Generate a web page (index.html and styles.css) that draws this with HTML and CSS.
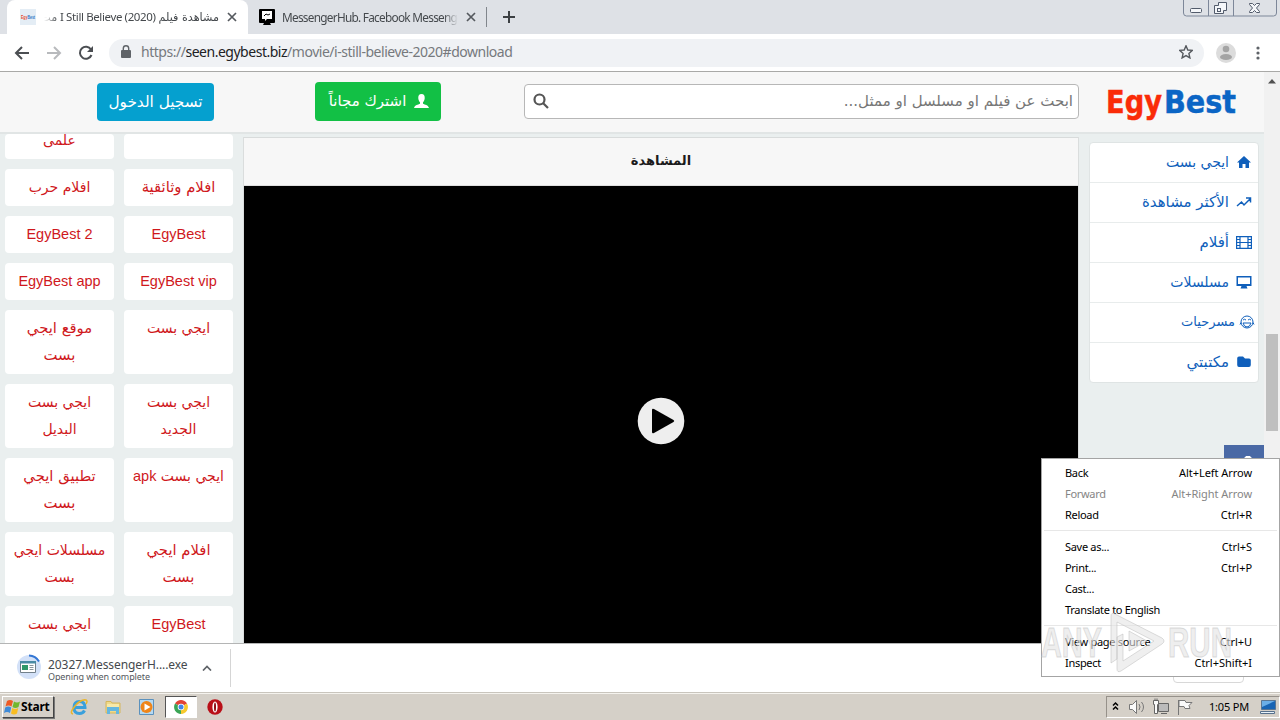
FILE: index.html
```html
<!DOCTYPE html>
<html lang="ar">
<head>
<meta charset="utf-8">
<title>EgyBest</title>
<link rel="stylesheet" href="styles.css">
</head>
<body>
<div class="tabs">
  <div class="tab tab-active">
    <svg class="favicon" viewBox="0 0 16 16"><path fill="#e4edf5" d="M0 0h16v16H0z"/><text x="1" y="10" textLength="14" lengthAdjust="spacingAndGlyphs"><tspan fill="#e6482d">Egy</tspan><tspan fill="#2d76c4">Best</tspan></text></svg>
    <span class="tab-title fade-left" dir="rtl"><span class="t-ar">مشاهدة فيلم</span> <bdi>I Still Believe (2020)</bdi> <span class="t-ar">مت</span></span>
    <svg class="close" viewBox="0 0 10 10"><path d="M1 1l8 8M9 1L1 9"/></svg>
  </div>
  <div class="tab tab-second">
    <svg class="msg-icon" viewBox="0 0 16 17"><path fill="#000" d="M1 0h14a1 1 0 0 1 1 1v12a1 1 0 0 1-1 1h-4l1 2H4l1-2H1a1 1 0 0 1-1-1V1a1 1 0 0 1 1-1z"/><path fill="#fff" d="M3 2h10v8H8l-2 2v-2H3z"/><path d="M5 7l2-2 2 1 2-1" fill="none" stroke="#000"/></svg>
    <span class="tab-title fade-right">MessengerHub. Facebook Messenge</span>
    <svg class="close" viewBox="0 0 10 10"><path d="M1 1l8 8M9 1L1 9"/></svg>
  </div>
  <span class="tab-divider"></span>
  <svg class="plus" viewBox="0 0 12 12"><path d="M6 0v12M0 6h12"/></svg>
  <svg class="winctl" viewBox="0 0 94 17"><path d="M.5 0v13q0 3 3 3h87q3 0 3-3V0M25.500 0v16M50.500 0v16" fill="none" stroke="#7d8799"/><g fill="#f4f6f9" stroke="#525b6b"><rect x="7.500" y="8.500" width="11" height="4" rx="1"/><path d="M35.500 2.500h8v8h-3v3h-9v-8h4z"/><rect x="34.500" y="8.500" width="3" height="3"/><path d="M66.500 3.500h3l2 2 2-2h3v1l-3 3.500 3 3.500v1h-3l-2-2-2 2h-3v-1l3-3.500-3-3.500z"/></g></svg>
</div>
<div class="toolbar">
  <svg class="nav-icons" viewBox="0 0 90 20"><g fill="none" stroke-width="2"><path stroke="#4b4e52" d="M22 10H9M15 4l-6 6 6 6"/><path stroke="#b8babd" d="M40 10h13M47 4l6 6-6 6"/><path stroke="#4b4e52" d="M84 6.500a6 6 0 1 0 .5 5.500"/></g><path fill="#4b4e52" d="M86 3v6h-6z"/></svg>
  <div class="omnibox">
    <svg class="lock" viewBox="0 0 10 13"><path fill="#5f6368" d="M1 5h8q1 0 1 1v6q0 1-1 1H1q-1 0-1-1V6q0-1 1-1z"/><path d="M2.300 5.500V3.500a2.700 2.700 0 0 1 5.400 0v2" fill="none" stroke="#5f6368" stroke-width="1.400"/></svg>
    <span class="url">https://<b>seen.egybest.biz</b>/movie/i-still-believe-2020#download</span>
    <svg class="star" viewBox="0 0 14 14"><path d="M7 .8l1.800 4.200 4.600.4-3.500 3 1 4.500L7 10.600l-3.900 2.300 1-4.500-3.500-3 4.600-.4z"/></svg>
  </div>
  <svg class="avatar" viewBox="0 0 20 20"><circle cx="10" cy="10" r="10" fill="#dcdcdc"/><circle cx="10" cy="6" r="3.300" fill="#a4a4a4"/><ellipse cx="10" cy="14" rx="6" ry="3" fill="#a4a4a4"/></svg>
  <svg class="dots" viewBox="0 0 4 14"><g fill="#5f6368"><circle cx="2" cy="2" r="1.600"/><circle cx="2" cy="7" r="1.600"/><circle cx="2" cy="12" r="1.600"/></g></svg>
</div>
<div class="viewport">
  <div class="site">
    <header class="head">
      <a class="btn btn-login" dir="rtl">تسجيل الدخول</a>
      <a class="btn btn-join" dir="rtl"><svg viewBox="0 0 15 14"><path fill="#fff" d="M7.500 0c2.500 0 3.500 2 3.200 4.500-.2 2-1 3-1.700 3.800v1.500c2 1 5 1 6 4.200H0c1-3.200 4-3.200 6-4.200V8.300C5.300 7.500 4.500 6.500 4.300 4.500 4 2 5 0 7.500 0z"/></svg>اشترك مجاناً</a>
      <div class="search"><svg viewBox="0 0 16 16"><circle cx="6.500" cy="6.500" r="5" /><path d="M10 10l5 5"/></svg><span dir="rtl">ابحث عن فيلم او مسلسل او ممثل...</span></div>
      <svg class="logo" viewBox="0 0 132 44"><text x="-1" y="31" textLength="56" lengthAdjust="spacingAndGlyphs" fill="#fa2b08" stroke="#fa2b08">Egy</text><text x="57" y="31" textLength="72" lengthAdjust="spacingAndGlyphs" fill="#0b65c5" stroke="#0b65c5">Best</text></svg>
    </header>
    <div class="content">
      <div class="tags">
        <a dir="rtl" class="cut">علمى</a><a class="cut"></a>
        <a dir="rtl">افلام حرب</a><a dir="rtl" class="big">افلام وثائقية</a>
        <a class="en">EgyBest 2</a><a class="en">EgyBest</a>
        <a class="en">EgyBest app</a><a class="en">EgyBest vip</a>
        <a dir="rtl" class="big">موقع ايجي<br>بست</a><a dir="rtl">ايجي بست</a>
        <a dir="rtl">ايجي بست<br>البديل</a><a dir="rtl">ايجي بست<br>الجديد</a>
        <a dir="rtl" class="big">تطبيق ايجي<br>بست</a><a dir="rtl">ايجي بست <span class="en">apk</span></a>
        <a dir="rtl">مسلسلات ايجي<br>بست</a><a dir="rtl" class="big">افلام ايجي<br>بست</a>
        <a dir="rtl">ايجي بست</a><a class="en">EgyBest</a>
      </div>
      <main class="player">
        <h2 dir="rtl">المشاهدة</h2>
        <div class="video"><svg viewBox="0 0 48 48"><circle cx="24" cy="24" r="23.300" fill="#eee"/><path d="M15 13q0-2 2-1l19.500 11q1.500 1 0 2L17 36q-2 1-2-1z"/></svg></div>
      </main>
      <aside class="side">
        <nav class="menu" dir="rtl">
          <a><svg viewBox="0 0 16 16"><path fill="#0f5fbb" d="M8 2l7 6.500h-2V14H9.500v-4h-3v4H3V8.500H1z"/></svg>ايجي بست</a>
          <a class="big"><svg viewBox="0 0 16 16"><path fill="none" stroke="#0f5fbb" stroke-width="1.500" d="M1 12l4.500-4L8 11l6-6M10 4h4.500v4.500"/></svg>الأكثر مشاهدة</a>
          <a class="big"><svg viewBox="0 0 16 16"><path fill="none" stroke="#0f5fbb" stroke-width="1.200" d="M.6 2.600h14.800v11.800H.6zM4 2.500v12M12 2.500v12M4 8.500h8M.5 5.500H4M.5 8.500H4M.5 11.500H4M12 5.500h3.500M12 8.500h3.500M12 11.500h3.500"/></svg>أفلام</a>
          <a><svg viewBox="0 0 16 16"><path fill="#0f5fbb" fill-rule="evenodd" d="M.5 2h15v10h-5l1 2.500h-7l1-2.500h-5zM2 3.500v6.500h12V3.500z"/></svg>مسلسلات</a>
          <a class="wide"><svg viewBox="0 0 16 16"><g fill="none" stroke="#0f5fbb"><circle cx="8" cy="8" r="6"/><path d="M4 9h8q-1 4-4 4T4 9zM4 6q1.500-1.500 3 0M9 6q1.500-1.500 3 0M2 8.500l-1 2M14 8.500l1 2"/></g></svg>مسرحيات</a>
          <a class="big"><svg viewBox="0 0 16 16"><path fill="#0f5fbb" d="M3 2.500h4l2 2h4q1.800 0 1.800 1.800V11q0 2-2 2H3q-1.800 0-1.800-2V4.300q0-1.800 1.800-1.800z"/></svg>مكتبتي</a>
        </nav>
        <div class="share"></div>
      </aside>
    </div>
  </div>
  <div class="scroll"><svg viewBox="0 0 8 5"><path d="M4 0l4 4.500H0z" fill="#505050"/></svg><span class="thumb"></span></div>
</div>
<div class="downloads">
  <svg class="dl-icon" viewBox="0 0 26 26"><circle cx="13" cy="13" r="12" fill="#d3e1f8"/><path d="M13 1.500a12 12 0 0 1 10 6" fill="none" stroke="#3477d4" stroke-width="2"/><path fill="#fff" stroke="#72808b" d="M4.500 7.500h15v11h-15z"/><path fill="#4a8ba5" d="M4 7h16v2.500H4z"/><path fill="#2f9869" d="M6 11h6v5H6z"/><path stroke="#89949c" d="M13.500 11.500h4M13.500 13.500h4M13.500 15.500h4"/></svg>
  <div class="dl-text"><div class="dl-name">20327.MessengerH....exe</div><div class="dl-sub">Opening when complete</div></div>
  <svg class="chev" viewBox="0 0 10 6"><path d="M1 5.500l4-4 4 4" fill="none" stroke="#5f6368" stroke-width="1.700"/></svg>
  <span class="dl-div"></span>
  <span class="show-all"></span>
</div>
<div class="taskbar">
  <div class="start"><svg viewBox="0 0 17 16"><path fill="#ee5a24" d="M3 2q3-2 6 0L7.500 7.500q-3-2-6 0z"/><path fill="#72b72e" d="M10 2.500q3 2 6 0L14.500 8q-3 2-6 0z"/><path fill="#3f8bd8" d="M1.200 8.500q3-2 6 0L6 14q-3-2-6 0z"/><path fill="#f9bd22" d="M8.200 9q3 2 6 0L13 14.500q-3 2-6 0z"/></svg><b>Start</b></div>
  <svg class="q" viewBox="0 0 18 18"><path fill="none" stroke="#3aa0dc" stroke-width="3" d="M4 9.500h11q0-6-5.500-6T4 9.500t5.500 6q3.500 0 5-3"/><path fill="none" stroke="#e9b52c" stroke-width="1.500" d="M3 16q-4-1 2-8t11-6q2 1 0 4"/></svg>
  <svg class="q" viewBox="0 0 18 18"><path fill="#efd98a" stroke="#d5b65c" d="M2 3.500h5l1 1.500h8v10H2z"/><path fill="#f8e9a8" d="M3 6h12v3H3z"/><path fill="#65b7df" d="M3 9h12v7h-3v-3H6v3H3z"/></svg>
  <svg class="q" viewBox="0 0 18 18"><path fill="#b5d9f2" stroke="#5b91bd" d="M1.500 1.500h14v15h-14z"/><circle cx="8.500" cy="9" r="6" fill="#ef8519"/><path fill="#fff" d="M6.500 5.500l6 3.500-6 3.500z"/></svg>
  <div class="task-on"><svg class="chrome" viewBox="0 0 14 14"><path fill="#e24335" d="M7 7L1 3.500A7 7 0 0 1 13 3.500z"/><path fill="#f7c92d" d="M7 7l6-3.500A7 7 0 0 1 7 14z"/><path fill="#3aa556" d="M7 7v7A7 7 0 0 1 1 3.500z"/><circle cx="7" cy="7" r="3.300" fill="#fff"/><circle cx="7" cy="7" r="2.500" fill="#4285e8"/></svg></div>
  <svg class="q opera" viewBox="0 0 16 16"><circle cx="8" cy="8" r="7.700" fill="#b90f18"/><ellipse cx="8" cy="8" rx="2.600" ry="5.500" fill="#fff"/><ellipse cx="8" cy="8" rx="1" ry="4.600" fill="#8e0c13"/></svg>
  <div class="tray">
    <svg class="tray-icons" viewBox="0 0 90 20"><path fill="none" stroke="#000" stroke-width="1.500" d="M6 8.500L8.500 6 11 8.500M6 12.500L8.500 10l2.500 2.500"/><g fill="#fafafa" stroke="#777"><path d="M22.500 7.500h3l4-4v13l-4-4h-3z"/><path fill="none" d="M32 7q2 3 0 6M34.500 5q4 5 0 10"/><path fill="#bbb" stroke="#666" d="M51.500 6.500h10v8h-10zM54 16.500h6"/><path stroke="#666" d="M46.500 3.500h5v4h-1v9h-3v-9h-1zM48 1.500v2M50 1.500v2"/><path d="M71.500 3v15M72 3.500h6l1 2h6l-3 3 1 3h-5l-1-2h-5z"/></g></svg>
    <span class="clock">1:05 PM</span>
    <svg class="desk" viewBox="0 0 17 14"><path fill="#1864b4" stroke="#5b7693" d="M1.500.5h14v9h-14z"/><path fill="#6baee7" d="M2 1h13L2 7z"/><path fill="#e8f2fa" stroke="#56708c" d="M.5 11.500h14v2H.5z"/></svg>
  </div>
</div>
<div class="context">
  <div class="row"><span>Back</span><span>Alt+Left Arrow</span></div>
  <div class="row off"><span>Forward</span><span>Alt+Right Arrow</span></div>
  <div class="row"><span>Reload</span><span>Ctrl+R</span></div>
  <hr>
  <div class="row"><span>Save as...</span><span>Ctrl+S</span></div>
  <div class="row"><span>Print...</span><span>Ctrl+P</span></div>
  <div class="row"><span>Cast...</span></div>
  <div class="row"><span>Translate to English</span></div>
  <hr>
  <div class="row"><span>View page source</span><span>Ctrl+U</span></div>
  <div class="row"><span>Inspect</span><span>Ctrl+Shift+I</span></div>
</div>
<svg class="watermark" viewBox="0 0 196 64"><g fill="#e4e4e4" fill-opacity=".6" stroke="#bbb" stroke-opacity=".5"><text x="2" y="46" textLength="61" lengthAdjust="spacingAndGlyphs">ANY</text><text x="129" y="46" textLength="64" lengthAdjust="spacingAndGlyphs">RUN</text><path fill-rule="evenodd" d="M72 5q0-4 4-2l47 24q4 3 0 6L82 60q-4 2-4-2V26l6-3v27l31-20-37-19v37l-6 4zM90 20l18 10-18 10z"/></g></svg>
</body>
</html>
```
FILE: styles.css
```css
* { box-sizing: border-box; }
body { margin: 0; width: 1280px; height: 720px; overflow: hidden; position: relative; display: flex; flex-direction: column; font-family: "Noto Sans", "DejaVu Sans", sans-serif; background: #fff; }
svg { display: block; flex: none; }
.tabs { height: 34px; flex: none; background: #dee1e6; display: flex; align-items: center; }
.tab { display: flex; align-items: center; height: 34px; font-size: 11.5px; letter-spacing: -.38px; color: #45494d; }
.tab-active { width: 241px; margin-left: 7px; background: #fff; border-radius: 8px 8px 0 0; padding-left: 13px; }
.favicon { width: 16px; height: 16px; font: bold 5px "Liberation Sans", sans-serif; letter-spacing: 0; }
.tab-title { white-space: nowrap; line-height: 20px; }
.fade-left { width: 175px; margin-left: 8px; mask-image: linear-gradient(90deg, transparent, #000 14px); }
.fade-right { width: 176px; margin-left: 7px; letter-spacing: -.72px; font-size: 11.8px; mask-image: linear-gradient(270deg, transparent, #000 14px); }
.t-ar { font: 11.2px "DejaVu Sans", sans-serif; letter-spacing: 0; }
.close { width: 10px; height: 10px; margin-left: 8px; }
.close path { stroke: #55595e; stroke-width: 1.700; }
.tab-second { padding-left: 11px; width: 238px; }
.tab-second .close { margin-left: 8px; }
.msg-icon { width: 16px; height: 17px; }
.tab-divider { width: 1px; height: 20px; background: #81868c; }
.plus { width: 12px; height: 12px; margin-left: 16px; }
.plus path { stroke: #3c4043; stroke-width: 2; }
.winctl { width: 94px; height: 17px; margin-left: auto; margin-right: 3px; align-self: flex-start; }
.toolbar { height: 38px; flex: none; border-bottom: 1px solid #a9a9a7; display: flex; align-items: center; }
.nav-icons { width: 90px; height: 20px; margin-left: 7px; }
.omnibox { display: flex; align-items: center; height: 28px; width: 1095px; margin-left: 12px; border-radius: 14px; background: #f0f2f5; padding: 0 11px 2px 12px; }
.lock { width: 10px; height: 13px; }
.url { font-size: 14px; line-height: 20px; letter-spacing: -.48px; margin-left: 10px; color: #76797d; white-space: nowrap; }
.url b { font-weight: 400; color: #202124; }
.star { width: 14px; height: 14px; margin-left: auto; }
.star path { fill: none; stroke: #55595e; stroke-width: 1.400; }
.avatar { width: 20px; height: 20px; margin-left: 12px; }
.dots { width: 4px; height: 14px; margin-left: 20px; }
.viewport { height: 571px; flex: none; display: flex; overflow: hidden; }
.site { width: 1264px; background: #eaefef; display: flex; flex-direction: column; font-family: "DejaVu Sans", sans-serif; }
.head { height: 62px; flex: none; background: #f7f7f7; border-bottom: 2px solid #e1e5e5; display: flex; padding-left: 97px; }
.btn { display: flex; align-items: center; justify-content: center; border-radius: 4px; color: #fff; white-space: nowrap; }
.btn-login { width: 117px; height: 38px; margin-top: 11px; background: #05a0cf; font-size: 15.3px; }
.btn-join { width: 126px; height: 39px; margin: 10px 0 0 101px; background: #12c045; font-size: 15px; gap: 8px; padding: 0 0 2px 2px; }
.btn-join svg { width: 15px; height: 14px; }
.search { width: 555px; height: 35px; margin: 12px 0 0 83px; border: 1px solid #b7b7b7; border-radius: 4px; background: #fff; display: flex; align-items: center; justify-content: space-between; padding: 0 5px 2px 8px; font-size: 15px; color: #777; }
.search svg { width: 16px; height: 16px; }
.search circle, .search path { fill: none; stroke: #555; stroke-width: 2.200; }
.logo { width: 132px; height: 44px; margin: 10px 0 0 28px; font: bold 32px "DejaVu Sans", sans-serif; stroke-width: .5px; }
.content { display: flex; height: 509px; }
.tags { width: 243px; flex: none; padding: 0 10px 0 5px; display: grid; grid-template-columns: 109px 109px; column-gap: 10px; row-gap: 10px; grid-template-rows: 25px 37px 37px 37px 64px 64px 64px 64px 64px; }
.tags a { background: #fff; border-radius: 4px; color: #cf181c; font-size: 14px; line-height: 27px; text-align: center; padding-top: 5px; overflow: hidden; white-space: nowrap; }
.tags .cut { padding: 0; line-height: 13px; }
.tags .big { font-size: 14.800px; padding-top: 4px; }
.tags .en { font-family: "Liberation Sans", sans-serif; font-size: 14.500px; }
.tags a.en { padding-top: 5px; }
.player { width: 836px; flex: none; border: 1px solid #dadddd; border-width: 0 1px; margin-top: 3px; display: flex; flex-direction: column; }
.player h2 { margin: 0; height: 49px; flex: none; background: #f7f7f7; border-top: 1px solid #d8dbdb; text-align: center; font-size: 13px; line-height: 46px; color: #1b1b1b; border-bottom: 1px solid #e0e0e0; }
.video { background: #000; flex: 1; display: flex; justify-content: center; padding-top: 211px; }
.video svg { width: 48px; height: 48px; }
.side { width: 185px; padding: 8px 6px 0 10px; display: flex; flex-direction: column; }
.menu { width: 170px; height: 241px; border: 1px solid #dfe4e4; border-radius: 4px; background: #fff; }
.menu a { display: flex; align-items: center; height: 40px; border-bottom: 1px solid #e8ecec; color: #0f5fbb; font-size: 14px; gap: 7px; padding: 0 6px 2px 0; white-space: nowrap; }
.menu a:last-child { border: 0; }
.menu svg { width: 16px; height: 16px; }
.menu .big { font-size: 15px; }
.menu .wide { padding-right: 3px; gap: 4px; font-size: 13px; }
.share { width: 40px; height: 40px; margin: 62px 0 0 135px; background: radial-gradient(circle at 24px 15px, #fff 4px, #4a69a5 4.500px); flex: none; }
.scroll { width: 16px; background: #f1f1f1; display: flex; flex-direction: column; align-items: center; }
.scroll svg { width: 8px; height: 5px; margin-top: 7px; }
.thumb { width: 12px; height: 97px; background: #bfbfbf; margin-top: 250px; }
.downloads { height: 49px; flex: none; border-top: 1px solid #b4b5b5; display: flex; align-items: flex-start; }
.dl-icon { width: 26px; height: 26px; margin: 10px 0 0 16px; }
.dl-text { margin: 13px 0 0 6px; width: 142px; white-space: nowrap; }
.dl-name { font-size: 12px; line-height: 15px; letter-spacing: -.07px; color: #45494d; }
.dl-sub { font-size: 9px; line-height: 9px; letter-spacing: -.1px; color: #55595e; }
.chev { width: 10px; height: 6px; margin: 21px 0 0 12px; }
.dl-div { width: 1px; height: 38px; margin: 5px 0 0 18px; background: #d5d5d5; }
.show-all { width: 71px; height: 28px; margin: 11px 36px 0 auto; border: 1px solid #d8d8d8; border-radius: 4px; }
.taskbar { height: 28px; flex: none; background: #d5d0c8; border-top: 1px solid #c9c5bd; box-shadow: inset 0 1px #f5f3ee; display: flex; align-items: center; }
.start { width: 52px; height: 22px; margin-left: 2px; border: 1px solid; border-color: #fff #444 #444 #fff; box-shadow: 1px 1px #777; display: flex; align-items: center; padding-left: 1px; font-size: 12px; color: #000; }
.start svg { width: 17px; height: 16px; }
.start b { letter-spacing: -.2px; }
.q { width: 18px; height: 18px; margin-left: 16px; }
.q + .q { margin-left: 16px; }
.task-on { width: 32px; height: 22px; margin-left: 9px; background: #fff; border: 1px solid; border-color: #555 #fff #fff #555; display: flex; align-items: center; justify-content: center; }
.chrome { width: 14px; height: 14px; }
.opera { width: 16px; height: 16px; margin-left: 10px; }
.tray { margin-left: auto; width: 174px; height: 22px; border: 1px solid; border-color: #96918a #fff #fff #96918a; display: flex; align-items: center; }
.tray-icons { width: 90px; height: 20px; }
.clock { font-size: 11px; letter-spacing: -.2px; width: 51px; margin-left: 12px; color: #000; white-space: nowrap; line-height: 18px; }
.desk { width: 17px; height: 14px; }
.context { position: absolute; left: 1041px; top: 458px; width: 239px; height: 219px; border: 1px solid #a4a4a4; background: #fff; padding: 3px 27px 3px 23px; font-size: 11px; letter-spacing: -.3px; color: #000; }
.row { display: flex; justify-content: space-between; height: 21px; line-height: 21px; white-space: nowrap; }
.row span + span { letter-spacing: -.05px; }
.off { color: #858585; }
.context hr { height: 1px; border: 0; margin: 5px -25px 5px -21px; background: #e7e7e7; }
.watermark { position: absolute; left: 1039px; top: 611px; width: 196px; height: 64px; font: bold 42px "Liberation Sans", sans-serif; }
```
